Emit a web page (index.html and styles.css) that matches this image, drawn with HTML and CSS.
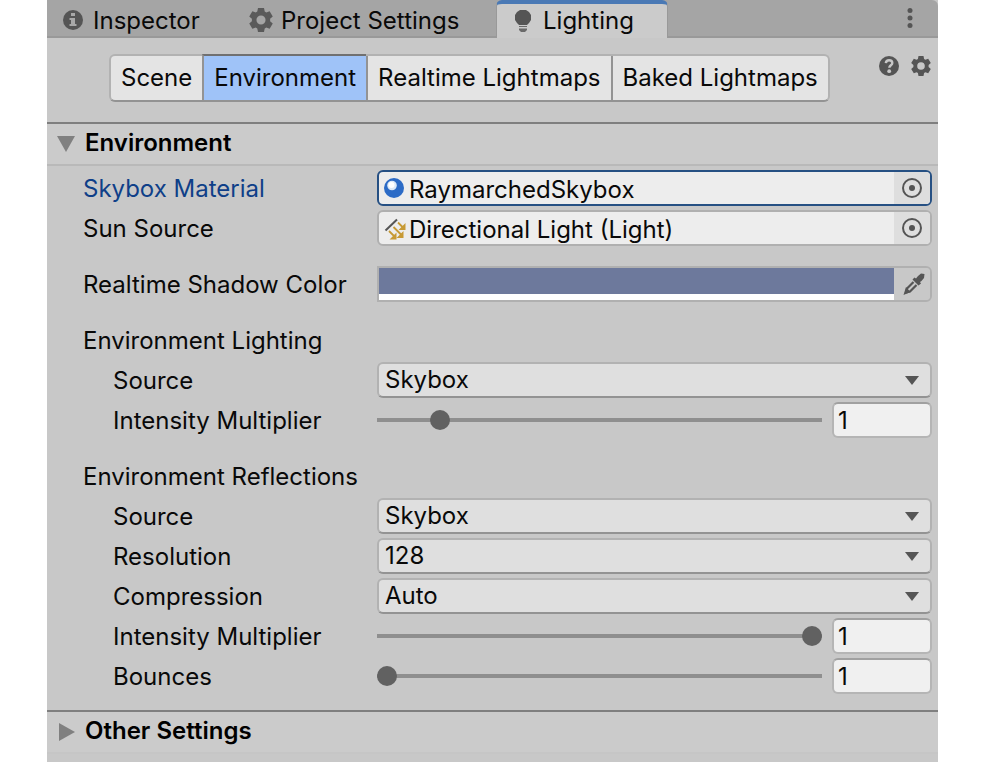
FILE: index.html
```html
<!DOCTYPE html>
<html lang="en">
<head>
<meta charset="utf-8">
<title>Lighting</title>
<link rel="stylesheet" href="styles.css">
</head>
<body>
<main class="panel">
  <nav class="tabs" aria-label="Windows">
    <button class="tab tab-inspector" type="button">
      <svg class="tab-icon" width="20" height="20" viewBox="0 0 20 20" aria-hidden="true"><circle cx="10" cy="10" r="10" fill="#555"/><path d="M8 3h4v3H8zM6.500 8H12v6h1.500v2h-7v-2H8v-4H6.500z" fill="#a8a8a8"/></svg>
      Inspector
    </button>
    <button class="tab tab-project" type="button">
      <svg class="tab-icon" width="24" height="24" viewBox="0 0 20 20" aria-hidden="true"><path fill="#5a5a5a" fill-rule="evenodd" d="M7.500 0h5l.6 3 1.300.7 2.800-1L19.800 7l-2.200 2v2l2.200 2-2.600 4.300-2.800-1-1.300.7-.6 3h-5l-.6-3-1.300-.7-2.800 1L.2 13l2.200-2V9L.2 7l2.600-4.300 2.800 1L6.900 3zM10 6.200a3.800 3.800 0 1 0 0 7.600 3.800 3.800 0 0 0 0-7.600z"/></svg>
      Project Settings
    </button>
    <button class="tab tab-active" type="button" aria-current="page">
      <svg width="16" height="22" viewBox="0 0 16 22" aria-hidden="true"><path fill="#555" d="M5 0h6l3 2 2 3v5l-2 3-2 2H4l-2-2-2-3V5l2-3z"/><path fill="#6a6a6a" d="M4 16h8v1H4zM4 18.500h8V20l-2 2H6l-2-2z"/></svg>
      Lighting
    </button>
    <button class="icon-button tab-menu" type="button" aria-label="Window menu">
      <svg width="6" height="20" viewBox="0 0 6 20" aria-hidden="true"><g fill="#555"><circle cx="3" cy="2.500" r="2.500"/><circle cx="3" cy="10" r="2.500"/><circle cx="3" cy="17.500" r="2.500"/></g></svg>
    </button>
  </nav>

  <header class="toolbar">
    <div class="segments">
      <button class="segment" type="button">Scene</button>
      <button class="segment segment-active" type="button" aria-pressed="true">Environment</button>
      <button class="segment" type="button">Realtime Lightmaps</button>
      <button class="segment" type="button">Baked Lightmaps</button>
    </div>
    <div class="tools">
      <button class="icon-button" type="button" aria-label="Help">
        <svg width="20" height="20" viewBox="0 0 20 20" aria-hidden="true"><circle cx="10" cy="10" r="10" fill="#555"/><path d="M6.800 7.200C7 5.200 8.300 4.200 10.100 4.200c1.900 0 3.200 1.100 3.200 2.700 0 2.300-3 2.400-3 4.900" fill="none" stroke="#c8c8c8" stroke-width="2.400"/><circle cx="10.200" cy="15.200" r="1.900" fill="#c8c8c8"/></svg>
      </button>
      <button class="icon-button" type="button" aria-label="Settings">
        <svg width="20" height="20" viewBox="0 0 20 20" aria-hidden="true"><path fill="#555" fill-rule="evenodd" d="M7.500 0h5l.6 3 1.300.7 2.800-1L19.800 7l-2.200 2v2l2.200 2-2.600 4.300-2.800-1-1.300.7-.6 3h-5l-.6-3-1.300-.7-2.800 1L.2 13l2.200-2V9L.2 7l2.600-4.300 2.800 1L6.900 3zM10 6.200a3.800 3.800 0 1 0 0 7.600 3.800 3.800 0 0 0 0-7.600z"/></svg>
      </button>
    </div>
  </header>

  <section>
    <h2 class="section-title">
      <button class="foldout" type="button" aria-expanded="true">
        <svg class="foldout-arrow" width="18" height="18" viewBox="0 0 18 18" aria-hidden="true"><path d="M0 1h18L9 17z" fill="#808080"/></svg>
        Environment
      </button>
    </h2>
    <div class="fields">
      <div class="group">
        <div class="row">
          <label class="label label-focused" for="skybox">Skybox Material</label>
          <div class="object-field object-focused">
            <svg class="object-icon" width="20" height="20" viewBox="0 0 20 20" aria-hidden="true"><circle cx="10" cy="10" r="10" fill="#2c6bc6"/><path d="M2 13a9 9 0 0 0 15 2 9 9 0 0 1-15-2z" fill="#3f85dc"/><circle cx="8" cy="7.500" r="4.800" fill="#dce9f7"/><circle cx="7.500" cy="7" r="3" fill="#fff"/></svg>
            <input class="object-value" id="skybox" type="text" value="RaymarchedSkybox" readonly>
            <button class="picker" type="button" aria-label="Select material"><svg width="20" height="20" viewBox="0 0 20 20" aria-hidden="true"><circle cx="10" cy="10" r="9" fill="none" stroke="#555" stroke-width="2"/><circle cx="10" cy="10" r="3" fill="#555"/></svg></button>
          </div>
        </div>
        <div class="row">
          <label class="label" for="sun">Sun Source</label>
          <div class="object-field">
            <svg class="object-icon" width="20" height="20" viewBox="0 0 20 20" overflow="visible" aria-hidden="true"><path d="M1.500 12.500 13 1.500" stroke="#555" stroke-width="2"/><g fill="none" stroke="#c79a35" stroke-width="1.800"><path d="m14 4.500 5 5M9.500 9l8 8M5 13l5 5"/></g><path d="M21.500 5v7h-7zM19.500 13v7h-7zM12.500 14.500v7h-7z" fill="#c79a35"/></svg>
            <input class="object-value" id="sun" type="text" value="Directional Light (Light)" readonly>
            <button class="picker" type="button" aria-label="Select light"><svg width="20" height="20" viewBox="0 0 20 20" aria-hidden="true"><circle cx="10" cy="10" r="9" fill="none" stroke="#555" stroke-width="2"/><circle cx="10" cy="10" r="3" fill="#555"/></svg></button>
          </div>
        </div>
      </div>

      <div class="group">
        <div class="row">
          <label class="label" for="shadow">Realtime Shadow Color</label>
          <div class="color-field">
            <input class="swatch" id="shadow" type="color" value="#6d799c">
            <button class="picker picker-color" type="button" aria-label="Pick color"><svg width="22" height="22" viewBox="0 0 22 22" aria-hidden="true"><path fill="#555" d="m15 3 3-2.500 3.500.5-.5 4-2.500 3-1.500 1 1 1.500-2.500 2L9.500 6.500l2-2 1.500 1z"/><path d="m10.500 9-6.500 6.500-1 4 4-1 6.500-6.500" fill="none" stroke="#555" stroke-width="2.200"/><path d="m3 14 4.500 5L.5 22z" fill="#555"/></svg></button>
          </div>
        </div>
      </div>

      <fieldset class="group">
        <legend class="heading">Environment Lighting</legend>
        <div class="row">
          <label class="label label-nested" for="light-source">Source</label>
          <div class="dropdown"><select class="select" id="light-source"><option>Skybox</option><option>Gradient</option><option>Color</option></select><svg class="arrow" width="14" height="9" viewBox="0 0 14 9" aria-hidden="true"><path d="M0 0h14L7 9z" fill="#555"/></svg></div>
        </div>
        <div class="row">
          <label class="label label-nested" for="light-intensity">Intensity Multiplier</label>
          <div class="slider-field"><input class="slider" id="light-intensity" type="range" min="0" max="8" step="0.01" value="1"><input class="number" type="text" value="1" aria-label="Intensity value"></div>
        </div>
      </fieldset>

      <fieldset class="group">
        <legend class="heading">Environment Reflections</legend>
        <div class="row">
          <label class="label label-nested" for="refl-source">Source</label>
          <div class="dropdown"><select class="select" id="refl-source"><option>Skybox</option><option>Custom</option></select><svg class="arrow" width="14" height="9" viewBox="0 0 14 9" aria-hidden="true"><path d="M0 0h14L7 9z" fill="#555"/></svg></div>
        </div>
        <div class="row">
          <label class="label label-nested" for="resolution">Resolution</label>
          <div class="dropdown"><select class="select" id="resolution"><option>128</option><option>256</option></select><svg class="arrow" width="14" height="9" viewBox="0 0 14 9" aria-hidden="true"><path d="M0 0h14L7 9z" fill="#555"/></svg></div>
        </div>
        <div class="row">
          <label class="label label-nested" for="compression">Compression</label>
          <div class="dropdown"><select class="select" id="compression"><option>Auto</option><option>Compressed</option></select><svg class="arrow" width="14" height="9" viewBox="0 0 14 9" aria-hidden="true"><path d="M0 0h14L7 9z" fill="#555"/></svg></div>
        </div>
        <div class="row">
          <label class="label label-nested" for="refl-intensity">Intensity Multiplier</label>
          <div class="slider-field"><input class="slider" id="refl-intensity" type="range" min="0" max="1" step="0.01" value="1"><input class="number" type="text" value="1" aria-label="Reflection intensity value"></div>
        </div>
        <div class="row">
          <label class="label label-nested" for="bounces">Bounces</label>
          <div class="slider-field"><input class="slider" id="bounces" type="range" min="1" max="5" value="1"><input class="number" type="text" value="1" aria-label="Bounces value"></div>
        </div>
      </fieldset>
    </div>
  </section>

  <section>
    <h2 class="section-title section-closed">
      <button class="foldout" type="button" aria-expanded="false">
        <svg class="foldout-arrow" width="18" height="18" viewBox="0 0 18 18" aria-hidden="true"><path d="M2 0v18l16-9z" fill="#808080"/></svg>
        Other Settings
      </button>
    </h2>
  </section>
</main>
</body>
</html>
```
FILE: styles.css
```css
* {
  box-sizing: border-box;
}

body {
  margin: 0;
  background: #fff;
  color: #090909;
  font: 24px/36px Inter, "Liberation Sans", sans-serif;
}

button,
input,
select {
  margin: 0;
  padding: 0;
  border: 0;
  border-radius: 0;
  background: none;
  color: inherit;
  font: inherit;
  outline: none;
}

svg {
  display: block;
  flex: none;
}

.panel {
  min-height: 100vh;
  margin: 0 48px 0 47px;
  background: #c8c8c8;
}

/* Window tabs */
.tabs {
  display: flex;
  height: 38px;
  background: #a5a5a5;
  box-shadow: inset 0 -2px #999;
  border-radius: 0 6px 0 0;
}

.tab {
  display: flex;
  align-items: center;
  gap: 10px;
  padding: 4px 16px 0;
  white-space: nowrap;
}

.tab-icon {
  margin-bottom: 2px;
}

.tab-inspector {
  width: 186px;
}

.tab-project {
  width: 263px;
  gap: 8px;
}

.tab-active {
  width: 172px;
  padding: 0 18px;
  gap: 12px;
  border-top: 4px solid #4a79b5;
  border-left: 1px solid #999;
  border-right: 1px solid #999;
  border-radius: 6px 6px 0 0;
  background: #cbcbcb;
}

.icon-button {
  display: flex;
  align-items: center;
}

.tab-menu {
  margin: 0 25px 0 auto;
  padding-bottom: 2px;
}

/* Page switcher */
.toolbar {
  display: flex;
  justify-content: space-between;
  padding: 16px 7px 20px 62px;
}

.segments {
  display: flex;
  height: 48px;
  border: 2px solid #b2b2b2;
  border-bottom-color: #939393;
  border-radius: 6px;
  background: #e4e4e4;
}

.segment {
  padding: 0 10px;
  white-space: nowrap;
}

.segment + .segment {
  border-left: 2px solid #939393;
}

.segment-active {
  margin-top: -2px;
  border-top: 2px solid #707070;
  background: #9fc3f8;
}

.tools {
  display: flex;
  gap: 12px;
  height: 24px;
}

/* Foldout headers */
.section-title {
  margin: 0;
  border-top: 2px solid #7f7f7f;
  border-bottom: 2px solid #b9b9b9;
  background: #cbcbcb;
  font-size: 24px;
  font-weight: 600;
}

.section-closed {
  border-bottom-color: #c6c6c6;
}

.foldout {
  display: flex;
  align-items: center;
  gap: 10px;
  width: 100%;
  height: 40px;
  padding: 0 10px 2px;
  color: #000;
}

.foldout-arrow {
  margin-top: 2px;
}

/* Property rows */
.fields {
  display: grid;
  gap: 20px;
  padding: 4px 6px 16px 36px;
}

.group {
  display: grid;
  gap: 4px;
  min-width: 0;
  margin: 0;
  padding: 0;
  border: 0;
}

.heading {
  height: 36px;
  margin-bottom: 4px;
  padding: 1px 0 0;
}

.row {
  display: grid;
  grid-template: 36px / 294px minmax(0, 1fr);
}

.label {
  padding-top: 1px;
}

.label-nested {
  padding-left: 30px;
}

.label-focused {
  color: #0f3f88;
}

.object-field,
.color-field {
  display: flex;
  height: 36px;
  border: 2px solid #b0b0b0;
  border-radius: 6px;
  overflow: hidden;
}

.object-field {
  background: #ededed;
}

.object-focused {
  border-color: #265083;
}

.object-icon {
  align-self: center;
  margin-left: 5px;
}

.object-value {
  flex: 1;
  min-width: 0;
  padding: 3px 5px 0;
}

.picker {
  display: flex;
  align-items: center;
  justify-content: center;
  width: 36px;
  background: #dedede;
}

.picker-color {
  padding-left: 4px;
  background: #c8c8c8;
}

.color-field {
  border-radius: 0 6px 6px 0;
}

.swatch {
  flex: 1;
  min-width: 0;
  height: 32px;
  padding: 0 0 6px;
  appearance: none;
  background: #fff;
}

.swatch::-webkit-color-swatch-wrapper {
  padding: 0;
}

.swatch::-webkit-color-swatch {
  border: 0;
  border-radius: 0;
}

.dropdown {
  position: relative;
}

.select {
  display: block;
  width: 100%;
  height: 36px;
  padding: 0 36px 0 6px;
  appearance: none;
  border: 2px solid #b2b2b2;
  border-bottom-color: #939393;
  border-radius: 6px;
  background: #dfdfdf;
  line-height: 28px;
}

.arrow {
  position: absolute;
  top: 14px;
  right: 13px;
  pointer-events: none;
}

.slider-field {
  display: flex;
  align-items: center;
  gap: 10px;
}

.slider {
  flex: 1;
  min-width: 0;
  height: 20px;
  appearance: none;
}

.slider::-webkit-slider-runnable-track {
  height: 4px;
  background: #8f8f8f;
}

.slider::-webkit-slider-thumb {
  width: 20px;
  height: 20px;
  margin-top: -8px;
  appearance: none;
  border-radius: 50%;
  background: #616161;
}

.number {
  width: 100px;
  height: 36px;
  padding: 2px 4px 0;
  border: 2px solid #b5b5b5;
  border-top-color: #a0a0a0;
  border-radius: 6px;
  background: #f0f0f0;
}
```
